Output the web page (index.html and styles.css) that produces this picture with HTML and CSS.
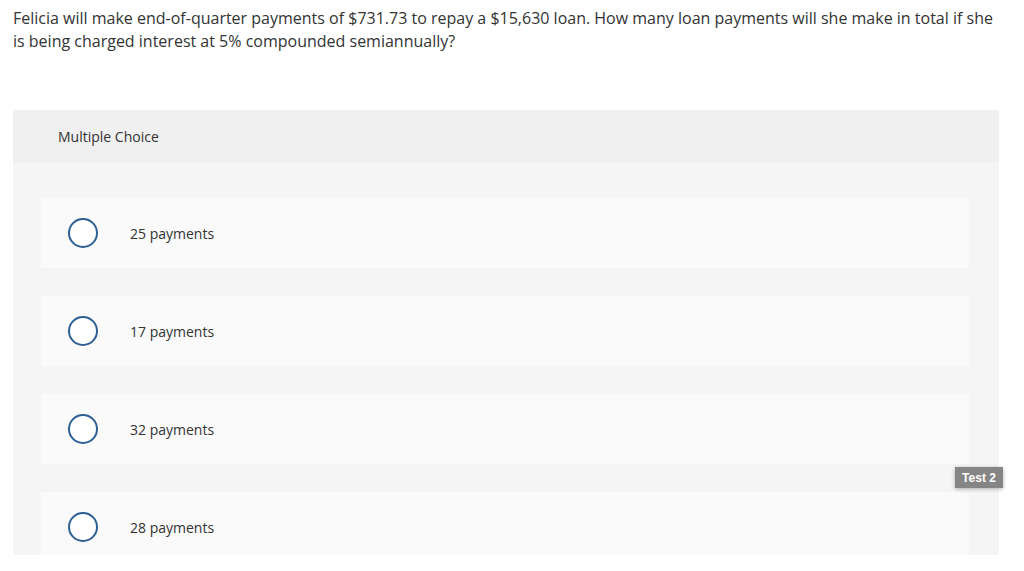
FILE: index.html
```html
<!DOCTYPE html>
<html lang="en">
<head>
<meta charset="utf-8">
<title>Multiple Choice</title>
<link rel="stylesheet" href="styles.css">
</head>
<body>
<div class="page">
  <p class="question">Felicia will make end-of-quarter payments of $731.73 to repay a $15,630 loan. How many loan payments will she make in total if she is being charged interest at 5% compounded semiannually?</p>
  <section class="panel">
    <div class="panel-head">Multiple Choice</div>
    <div class="options">
      <label class="option"><span class="radio"></span><span class="opt-text">25 payments</span></label>
      <label class="option"><span class="radio"></span><span class="opt-text">17 payments</span></label>
      <label class="option"><span class="radio"></span><span class="opt-text">32 payments</span></label>
      <label class="option"><span class="radio"></span><span class="opt-text">28 payments</span></label>
    </div>
  </section>
  <div class="badge">Test 2</div>
</div>
</body>
</html>
```
FILE: styles.css
```css
html, body {
  margin: 0;
  padding: 0;
  background: #ffffff;
}
body {
  font-family: "Open Sans", "Liberation Sans", sans-serif;
  color: #333333;
}
.page {
  position: relative;
  padding: 0 25px 0 13px;
  height: 571px;
  overflow: hidden;
}
.question {
  margin: 0;
  padding-top: 7px;
  font-size: 16px;
  line-height: 23px;
}
.panel {
  margin-top: 57px;
  width: 986px;
  height: 445px;
  background: #f5f5f5;
  overflow: hidden;
}
.panel-head {
  height: 53px;
  background: #f0f0f0;
  display: flex;
  align-items: center;
  padding-left: 45px;
  font-size: 14px;
  color: #333;
}
.options {
  display: flex;
  flex-direction: column;
  gap: 28px;
  padding: 35px 30px 0 28px;
}
.option {
  height: 70px;
  background: #fafafa;
  display: flex;
  align-items: center;
  padding-left: 27px;
  flex-shrink: 0;
}
.radio {
  width: 26px;
  height: 26px;
  border: 2px solid #2d5f93;
  border-radius: 50%;
  background: #ffffff;
  flex-shrink: 0;
}
.opt-text {
  margin-left: 32px;
  font-size: 14px;
  color: #333;
}
.badge {
  position: absolute;
  left: 955px;
  top: 467px;
  width: 48px;
  height: 21px;
  background: #858585;
  color: #ffffff;
  font-family: "Liberation Sans", Arial, sans-serif;
  font-weight: bold;
  font-size: 12px;
  display: flex;
  align-items: center;
  justify-content: center;
  box-shadow: 0 1px 4px rgba(0,0,0,0.3);
}
```
